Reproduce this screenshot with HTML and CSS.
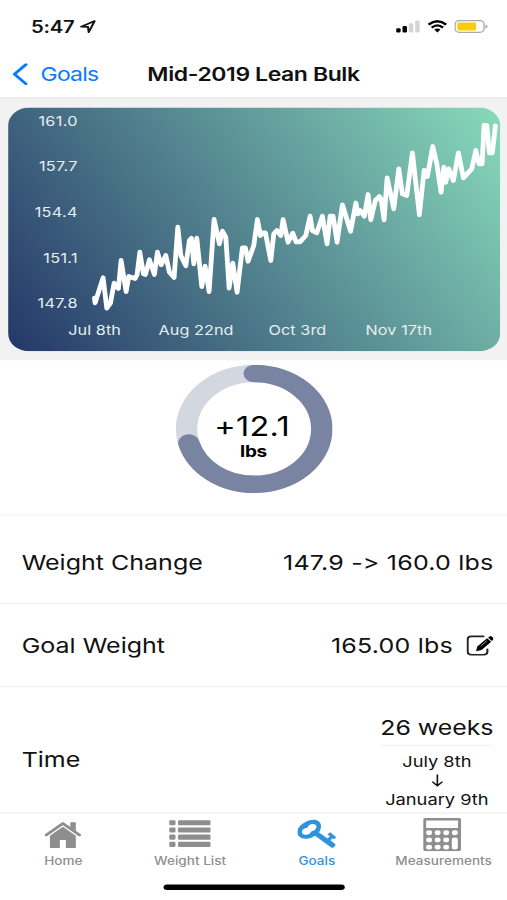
FILE: index.html
```html
<!DOCTYPE html>
<html lang="en">
<head>
    <meta charset="UTF-8">
    <title>Mid-2019 Lean Bulk</title>
    <link rel="stylesheet" href="styles.css">
</head>

<body>
<div class="phone">
  <div class="status">
    <span class="time">5:47</span>
    <svg class="location" width="12" height="12" viewBox="0 0 12 12"><path d="M1 6.1 L11 1 L6.6 11 L6.1 6.3 Z" fill="none" stroke="#111" stroke-width="1.5" stroke-linejoin="round"/></svg>
    <svg class="signal" width="18" height="12" viewBox="0 0 18 12">
      <rect x="0" y="7.4" width="3.3" height="4" rx="1"/>
      <rect x="4.7" y="5.4" width="3.3" height="6" rx="1"/>
      <rect x="9.4" y="3" width="3.3" height="8.4" rx="1" fill="#d4d4d4"/>
      <rect x="14.1" y="0.6" width="3.3" height="10.8" rx="1" fill="#d4d4d4"/>
    </svg>
    <svg class="wifi" width="15" height="12" viewBox="0 0 15 12">
      <path d="M1 4.2 Q7.5 -1.8 14 4.2 M3.3 6.9 Q7.5 3 11.7 6.9" fill="none" stroke="#000" stroke-width="2"/>
      <path d="M5.2 8.7 Q7.5 6.9 9.8 8.7 L7.5 11.3 Z"/>
    </svg>
    <svg class="battery" width="25" height="12" viewBox="0 0 25 12">
      <rect x="0.6" y="0.6" width="21.4" height="10.6" rx="3" fill="none" stroke="#a9a9a9"/>
      <rect x="2.3" y="2.2" width="13.8" height="7.4" rx="1.3" fill="#fccb0a"/>
      <path d="M23.1 4 Q24.6 4.5 24.6 6 Q24.6 7.4 23.1 7.9 Z" fill="#a9a9a9"/>
    </svg>
  </div>

  <div class="navbar">
    <a class="back">
      <svg width="12" height="20" viewBox="0 0 12 20"><path d="M10.2 1.2 L1.7 9.9 L10.2 18.6" fill="none" stroke="#077aff" stroke-width="2.3" stroke-linecap="round" stroke-linejoin="round"/></svg>
      <span>Goals</span>
    </a>
    <h1>Mid-2019 Lean Bulk</h1>
  </div>

  <div class="chart">
    <svg width="364" height="220" viewBox="0 0 364 220">
      <defs>
        <linearGradient id="bg" gradientUnits="userSpaceOnUse" x1="0" y1="220" x2="364" y2="0">
          <stop offset="0" stop-color="#243768"/>
          <stop offset="1" stop-color="#88dabb"/>
        </linearGradient>
      </defs>
      <rect width="364" height="220" rx="16" fill="url(#bg)"/>
      <g class="ylabels">
        <text x="51.6" y="16.4">161.0</text>
        <text x="51.6" y="57.4">157.7</text>
        <text x="51.6" y="98.6">154.4</text>
        <text x="51.6" y="139.9">151.1</text>
        <text x="51.6" y="180.9">147.8</text>
      </g>
      <g class="xlabels">
        <text x="64" y="204.8">Jul 8th</text>
        <text x="139" y="204.8">Aug 22nd</text>
        <text x="214" y="204.8">Oct 3rd</text>
        <text x="289" y="204.8">Nov 17th</text>
      </g>
      <polyline class="weights" transform="scale(.7396 .9022) translate(-8 -107)" points="94.3,297.7 95,302.3 103,277.3 106.7,307.7 110.3,302.7 114,282.7 118.3,288 121,260 126,291 128.7,276 135,278 137,274 139.7,251.7 143.3,273.3 145.3,274 149.3,259.3 154.3,274 157.3,251.7 161,264.3 165.7,255 169.3,271.7 174,277 177.7,226.7 180.7,255 185.7,265.3 189.3,240 191.3,237.7 193.7,263.3 196.7,237.7 201.7,286 205,265.7 209,291 214,219 219.3,243.3 222.3,230.7 225.7,236.7 229,287.5 232.7,262.7 237,291.7 242.3,247.3 245.3,247.3 248,260.7 253.7,245 257.3,219 260.3,235 262.3,232.3 265.3,232.3 270.7,260 273.7,233.3 276.7,230 280.7,235 283,219 288,241.7 292.7,232.7 296,241.3 300,241.3 305.7,235 310,215.7 312.3,230 316.7,232.3 322.3,215.7 327,243.3 330,215.7 333,215.7 337,241.7 342.3,204.3 350.5,230.7 355.8,202.5 357.7,213.3 360,210 364.3,215.7 368,194 370.7,219.3 375.3,200 379.3,196 381,198.3 384,219.3 387,177.3 393.7,208.3 398.7,168.3 402.3,193.3 406.7,195 412.3,152.3 419.3,214.3 424,170 427.3,176 432.7,146 436.7,163.3 441,191.7 443.7,166.7 445.7,181.7 448.7,168.3 453.3,180 458.3,152.3 463.3,177.3 471.7,168.3 475.7,150 479,163.3 482,163.3 484,125 486.7,125 489.3,152.3 492.3,152.3 495.3,125.3"/>
    </svg>
  </div>

  <div class="progress">
    <svg width="116" height="116" viewBox="0 0 116 116">
      <circle cx="58" cy="58" r="50" fill="none" stroke="#d2d7e0" stroke-width="15.8"/>
      <circle cx="58" cy="58" r="50" fill="none" stroke="#7984a2" stroke-width="15.8" stroke-linecap="round" stroke-dasharray="222.3 400" transform="rotate(-90 58 58)"/>
    </svg>
    <div class="gained">
      <span class="amount">+12.1</span>
      <span class="unit">lbs</span>
    </div>
  </div>

  <div class="row change">
    <span>Weight Change</span>
    <span class="value">147.9 -&gt; 160.0 lbs</span>
  </div>
  <div class="row goal">
    <span>Goal Weight</span>
    <span class="value">165.00 lbs</span>
    <svg class="edit" width="20" height="19" viewBox="0 0 20 19">
      <path d="M12.6 1.2 H3.6 Q0.9 1.2 0.9 3.9 V15 Q0.9 17.7 3.6 17.7 H12.8 Q15.5 17.7 15.5 15 V12.8" fill="none" stroke="#222" stroke-width="1.5" stroke-linecap="round"/>
      <path d="M15.3 2.9 L18.3 6.1 L11.2 13.4 L7.1 14.5 L8 10.4 Z"/>
      <path d="M16 2.3 L17.2 1.2 Q18 .6 18.6 1.2 L19.8 2.5 Q20.2 3.2 19.8 3.9 L18.9 5.3 Z"/>
      <path d="M10.6 9.8 L15.2 5.1" stroke="#fff" stroke-width=".5"/>
    </svg>
  </div>
  <div class="row duration">
    <span>Time</span>
    <div class="dates">
      <div class="weeks">26 weeks</div>
      <div>July 8th</div>
      <svg class="arrow" width="9" height="12" viewBox="0 0 9 12"><path d="M4.5 .8 V11 M.7 7.2 L4.5 11 L8.3 7.2" fill="none" stroke="#111" stroke-width="1.2"/></svg>
      <div>January 9th</div>
    </div>
  </div>

  <div class="tabs">
    <a class="tab">
      <svg width="27" height="30" viewBox="0 0 27 30">
        <path d="M1.2 15.4 L13.5 4.9 L25.8 15.4" fill="none" stroke="#8e8e8e" stroke-width="2.3" stroke-linecap="round" stroke-linejoin="round"/>
        <path d="M19 3.8 H23.1 V12 L19 8.5 Z M13.5 8 L23.1 16.1 V26.2 Q23.1 27 22.3 27 H15.7 V19.8 H11.3 V27 H4.7 Q3.9 27 3.9 26.2 V16.1 Z"/>
      </svg>
      <span>Home</span>
    </a>
    <a class="tab">
      <svg width="31" height="30" viewBox="0 0 31 30">
        <rect x="0.2" y="2" width="4.6" height="4.6" rx="1"/><rect x="6.7" y="2" width="24" height="4.6" rx=".8"/>
        <rect x="0.2" y="8.5" width="4.6" height="4.6" rx="1"/><rect x="6.7" y="8.5" width="24" height="4.6" rx=".8"/>
        <rect x="0.2" y="15" width="4.6" height="4.6" rx="1"/><rect x="6.7" y="15" width="24" height="4.6" rx=".8"/>
        <rect x="0.2" y="21.5" width="4.6" height="4.6" rx="1"/><rect x="6.7" y="21.5" width="24" height="4.6" rx=".8"/>
      </svg>
      <span>Weight List</span>
    </a>
    <a class="tab active">
      <svg width="29" height="30" viewBox="0 0 29 30">
        <path fill-rule="evenodd" d="M8.3 2.3 C13.5 .1 17.9 2.8 17.4 8.2 Q17.2 11.2 15.9 13 L22.3 18.6 L24.1 16.5 L22.2 14.8 L24.1 12.9 L28.7 17.3 L27 19.2 L25.8 18.2 L24.4 20 L27.7 23.2 Q28.6 24.2 27.6 25.5 L26.9 26.4 Q25.9 27.3 24.8 26.3 L13 16 Q10.3 18.5 6.8 18.8 C.9 19.2 -1.6 14 .7 9.2 Q3.2 4.5 8.3 2.3 Z M10.8 5.4 Q8 5.9 7.3 8.9 Q3.8 9.3 3.3 12.4 Q3.3 15.6 6.8 15.1 Q9.3 14.8 10.3 12.3 Q13.6 11.3 14.1 8.2 Q14.1 5.1 10.8 5.4 Z"/>
      </svg>
      <span>Goals</span>
    </a>
    <a class="tab">
      <svg class="calculator" width="28" height="30" viewBox="0 0 28 30">
        <path fill-rule="evenodd" d="M1.5 0 H26.5 Q28 0 28 1.8 V28 Q28 30 26.5 30 H1.5 Q0 30 0 28 V1.8 Q0 0 1.5 0 Z M2.2 2.2 V9 H25.8 V2.2 Z"/>
        <g fill="#fff">
          <ellipse cx="4.4" cy="13.3" rx="2.2" ry="2.2"/><ellipse cx="10.7" cy="13.3" rx="2.2" ry="2.2"/><ellipse cx="17" cy="13.3" rx="2.2" ry="2.2"/><ellipse cx="23.4" cy="13.3" rx="2.2" ry="2.2"/>
          <ellipse cx="4.4" cy="19.8" rx="2.2" ry="2.2"/><ellipse cx="10.7" cy="19.8" rx="2.2" ry="2.2"/><ellipse cx="17" cy="19.8" rx="2.2" ry="2.2"/>
          <ellipse cx="4.4" cy="26.3" rx="2.2" ry="2.2"/><ellipse cx="10.7" cy="26.3" rx="2.2" ry="2.2"/><ellipse cx="17" cy="26.3" rx="2.2" ry="2.2"/>
          <rect x="21.2" y="17.6" width="4.4" height="10.8" rx="2"/>
        </g>
      </svg>
      <span>Measurements</span>
    </a>
  </div>
  <div class="home-bar"></div>
</div>
</body>
</html>
```
FILE: styles.css
```css
body{
    margin: 0;
    height: 900px;
    background-color: #fff;
}
/* 375x812 screen stretched to fill the window */
.phone{
    width: 375px;
    height: 812px;
    display: flex;
    flex-direction: column;
    transform: scale(1.352, 1.10837);
    transform-origin: 0 0;
    font-family: Inter, "Liberation Sans", Arial, sans-serif;
    font-feature-settings: "calt" 0;
    color: #111;
}
.status{
    height: 44px;
    box-sizing: border-box;
    padding: 4px 14px 0 23px;
    display: flex;
    align-items: center;
}
.time{
    font-size: 15px;
    font-weight: 600;
    width: 32px;
    letter-spacing: -0.2px;
}
.location{
    margin-left: 4px;
}
.signal{
    margin-left: auto;
}
.wifi{
    margin: 0 5px 0 5px;
}
.navbar{
    height: 45px;
    box-sizing: border-box;
    padding-top: 1.5px;
    border-bottom: 1px solid #dcdcdc;
    display: grid;
    grid-template-columns: 94px 1fr 94px;
    align-items: center;
}
.navbar h1{
    margin: 0;
    font-size: 17px;
    font-weight: 600;
    text-align: center;
    white-space: nowrap;
    letter-spacing: -0.3px;
}
.back{
    display: flex;
    align-items: center;
    padding-left: 9px;
    gap: 9px;
    color: #077aff;
    font-size: 17px;
    letter-spacing: -0.6px;
}
.chart{
    height: 235.6px;
    box-sizing: border-box;
    padding: 7.6px 5px 0 6px;
    background-color: #f2f2f2;
}
.chart svg{
    display: block;
}
.ylabels, .xlabels{
    fill: #e6eef0;
    font-size: 12px;
}
.ylabels{
    text-anchor: end;
    letter-spacing: 0.25px;
}
.xlabels{
    text-anchor: middle;
    letter-spacing: 0.05px;
}
.weights{
    fill: none;
    stroke: #fff;
    stroke-width: 4.8;
    stroke-linejoin: round;
    stroke-linecap: round;
}
.progress{
    height: 139.6px;
    display: grid;
    justify-items: center;
    padding-top: 4.2px;
    box-sizing: border-box;
    align-items: start;
}
.progress svg, .gained{
    grid-area: 1 / 1;
}
.gained{
    height: 116px;
    box-sizing: border-box;
    padding-top: 11.5px;
    display: flex;
    flex-direction: column;
    align-items: center;
    justify-content: center;
    color: #000;
}
.amount{
    font-size: 24px;
    line-height: 28px;
    letter-spacing: 0.2px;
    margin-right: 2px;
}
.unit{
    font-size: 14px;
    font-weight: 700;
    line-height: 16px;
    letter-spacing: -0.2px;
}
.row{
    box-sizing: border-box;
    border-top: 1.5px solid #f3f3f3;
    padding: 0 10px 0 16px;
    display: flex;
    align-items: center;
    font-size: 18.5px;
    flex: none;
}
.value{
    margin-left: auto;
    letter-spacing: 0.15px;
}
.change{
    height: 80px;
    padding-top: 5.5px;
}
.goal{
    height: 74.5px;
    padding-top: 1px;
}
.edit{
    margin-left: 10px;
}
.duration{
    height: 113.9px;
    padding-top: 18px;
}
.dates{
    margin-left: auto;
    display: flex;
    flex-direction: column;
    align-items: center;
    font-size: 13.5px;
    line-height: 18px;
}
.weeks{
    font-size: 18.4px;
    line-height: 32px;
    border-bottom: 1.5px solid #f3f3f3;
    margin-bottom: 5px;
}
.arrow{
    margin: 1.7px 0;
}
.tabs{
    height: 54px;
    box-sizing: border-box;
    border-top: 1px solid #ebebeb;
    background-color: #fff;
    display: grid;
    grid-template-columns: repeat(4, 1fr);
    padding-top: 4.4px;
    flex: none;
}
.tab{
    display: flex;
    flex-direction: column;
    align-items: center;
    gap: 2.5px;
    font-size: 10px;
    line-height: 12px;
    font-weight: 500;
    letter-spacing: 0.02px;
    color: #8e8e8e;
    fill: #8e8e8e;
}
.active{
    color: #2e93dc;
    fill: #2e93dc;
}
.calculator{
    margin-right: 1.5px;
}
.home-bar{
    width: 134px;
    height: 5px;
    border-radius: 3px;
    background-color: #000;
    margin: 11.9px 0 0 121px;
}
```
